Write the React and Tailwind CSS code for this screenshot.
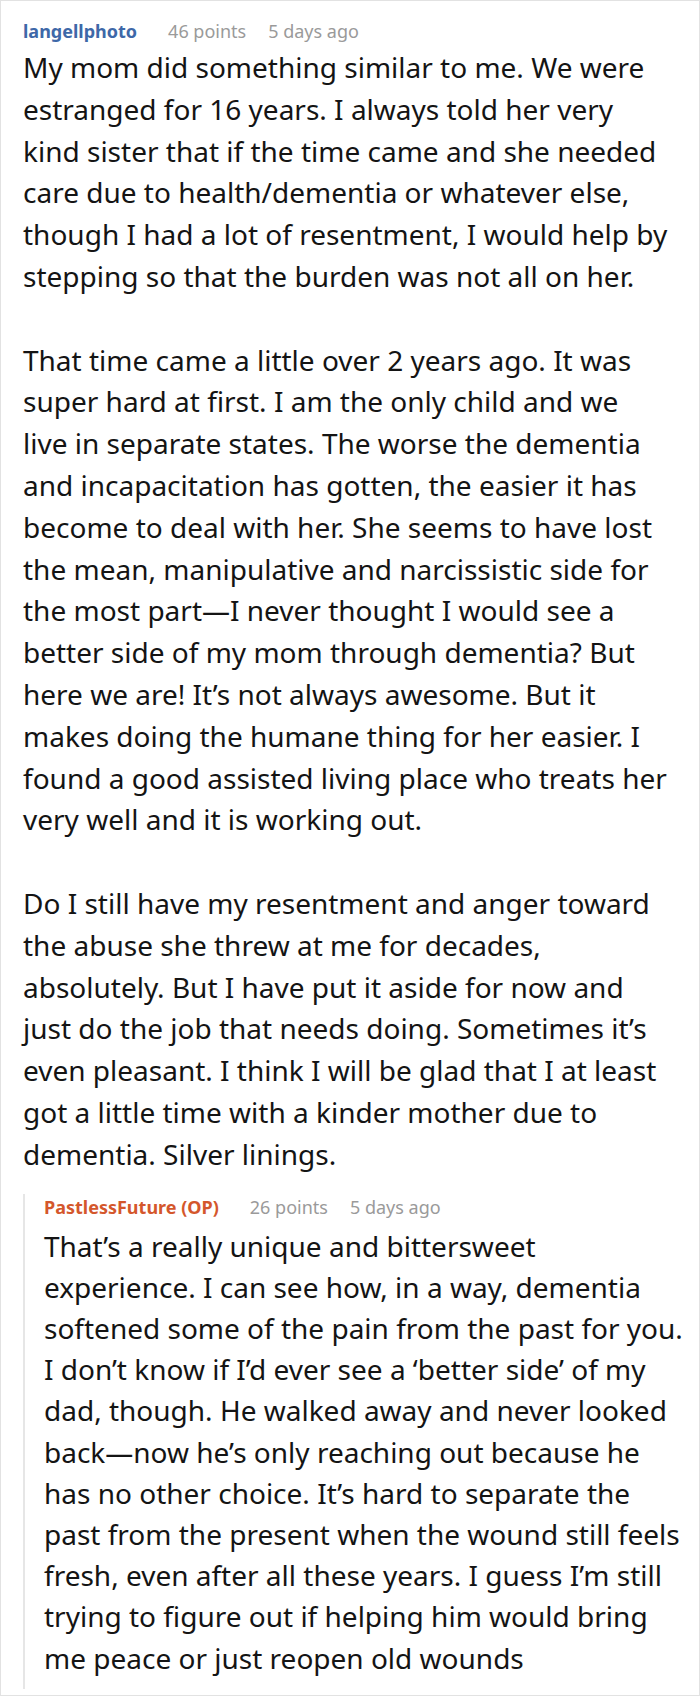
const comment = [
    [
        'My mom did something similar to me. We were',
        'estranged for 16 years. I always told her very',
        'kind sister that if the time came and she needed',
        'care due to health/dementia or whatever else,',
        'though I had a lot of resentment, I would help by',
        'stepping so that the burden was not all on her.',
    ],
    [
        'That time came a little over 2 years ago. It was',
        'super hard at first. I am the only child and we',
        'live in separate states. The worse the dementia',
        'and incapacitation has gotten, the easier it has',
        'become to deal with her. She seems to have lost',
        'the mean, manipulative and narcissistic side for',
        'the most part—I never thought I would see a',
        'better side of my mom through dementia? But',
        'here we are! It’s not always awesome. But it',
        'makes doing the humane thing for her easier. I',
        'found a good assisted living place who treats her',
        'very well and it is working out.',
    ],
    [
        'Do I still have my resentment and anger toward',
        'the abuse she threw at me for decades,',
        'absolutely. But I have put it aside for now and',
        'just do the job that needs doing. Sometimes it’s',
        'even pleasant. I think I will be glad that I at least',
        'got a little time with a kinder mother due to',
        'dementia. Silver linings.',
    ],
];

const reply = [
    'That’s a really unique and bittersweet',
    'experience. I can see how, in a way, dementia',
    'softened some of the pain from the past for you.',
    'I don’t know if I’d ever see a ‘better side’ of my',
    'dad, though. He walked away and never looked',
    'back—now he’s only reaching out because he',
    'has no other choice. It’s hard to separate the',
    'past from the present when the wound still feels',
    'fresh, even after all these years. I guess I’m still',
    'trying to figure out if helping him would bring',
    'me peace or just reopen old wounds',
];

const Meta = ({ name, nameClass, points, time }) => (
    <div className="flex items-center text-[18px] leading-[26px]">
        <span className={`font-bold ${nameClass}`}>{name}</span>
        <span className="ml-[31px] text-[#9a9a9a]">{points}</span>
        <span className="ml-[22px] text-[#9a9a9a]">{time}</span>
    </div>
);

const Lines = ({ lines }) =>
    lines.map((line, i) => (
        <span key={i} className="block whitespace-nowrap">
            {line}
        </span>
    ));

const App = () => {
    return (
        <div className="w-[700px] min-h-[1696px] bg-white border border-[#e2e2e2] pt-[17px] pb-[6px] pl-[22px] pr-[5px] font-['Noto_Sans',sans-serif] text-[#141414]">
            <Meta name="langellphoto" nameClass="text-[#3e68a8]" points="46 points" time="5 days ago" />

            <div className="mt-[3px] text-[28px] leading-[41.8px] flex flex-col gap-[41.8px]">
                {comment.map((para, i) => (
                    <p key={i}>
                        <Lines lines={para} />
                    </p>
                ))}
            </div>

            {/* OP reply */}
            <div className="mt-[18px] border-l-2 border-[#e6e6e6] pl-[19px] pb-[10px]">
                <Meta name="PastlessFuture (OP)" nameClass="text-[#d4572c]" points="26 points" time="5 days ago" />
                <p className="mt-[6px] text-[28px] leading-[41.2px]">
                    <Lines lines={reply} />
                </p>
            </div>
        </div>
    );
};

export default App;
